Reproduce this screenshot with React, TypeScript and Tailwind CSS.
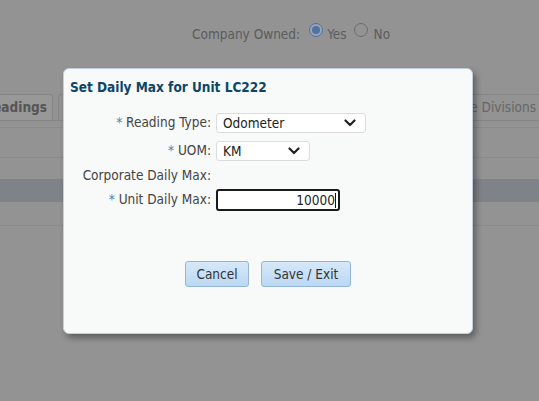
import React from 'react';

const font = { fontFamily: '"DejaVu Sans Condensed", Tahoma, "Noto Sans", sans-serif' };

function Chevron() {
  return (
    <svg width="12" height="8" viewBox="0 0 12 8" className="shrink-0">
      <path d="M1.5 1.5 L6 6 L10.5 1.5" fill="none" stroke="#222" strokeWidth="2.2" strokeLinecap="round" strokeLinejoin="round" />
    </svg>
  );
}

function Select({ value, width }: { value: string; width: string }) {
  return (
    <div className={`${width} h-[20px] flex items-center justify-between pl-[6px] pr-[9px] bg-white border border-[#dcdcdc] rounded-[3px] text-[13.5px] text-[#222]`}>
      <span>{value}</span>
      <Chevron />
    </div>
  );
}

function Label({ text, req }: { text: string; req?: boolean }) {
  return (
    <div className="w-[152px] shrink-0 text-right pr-[5px] text-[13.5px] text-[#444] leading-none">
      {req && <span className="text-[#4b86b8]">* </span>}
      {text}
    </div>
  );
}

export default function App() {
  return (
    <div className="relative w-[539px] h-[401px] overflow-hidden bg-[#939393]" style={font}>
      {/* dimmed page behind the dialog */}
      <div className="flex flex-col">
        <div className="h-[95px] pl-[192px] pt-[24px] flex items-start text-[13.5px] text-[#5c5c5c]">
          <span>Company Owned:</span>
          <span className="ml-[9px] mt-[-1px] w-[14px] h-[14px] rounded-full border border-[#4f72a3] flex items-center justify-center bg-[#9aa5b3]">
            <span className="w-[8px] h-[8px] rounded-full bg-[#4f72a3]" />
          </span>
          <span className="ml-[4px]">Yes</span>
          <span className="ml-[7px] mt-[-1px] w-[14px] h-[14px] rounded-full border border-[#6c6c6c]" />
          <span className="ml-[6px]">No</span>
        </div>
        <div className="h-[26px] flex items-end border-b border-[#858585]">
          <div className="h-[26px] w-[54px] border border-b-0 border-[#858585] rounded-tr-[4px] flex items-center justify-end pr-[5px] text-[13.5px] font-bold text-[#555] bg-[#989898] -ml-[1px]">
            eadings
          </div>
          <div className="h-[26px] w-[10px] ml-[5px] border border-b-0 border-[#858585] rounded-tl-[4px]" />
          <div className="flex-1" />
          <div className="h-[26px] w-[90px] border border-b-0 border-r-0 border-[#858585] rounded-tl-[4px] flex items-center justify-end pr-[4px] text-[13.5px] text-[#666] -mr-[1px]">
            e Divisions
          </div>
        </div>
        <div className="h-[7px] border-b border-[#8a8a8a]" />
        <div className="h-[31px] border-b border-[#8a8a8a] mt-[-1px]" />
        <div className="h-[21px]" />
        <div className="h-[23px] bg-[#7f8287]" />
        <div className="h-[24px] border-b border-[#8c8c8c]" />
      </div>

      {/* dialog */}
      <div className="absolute left-[63px] top-[68px] w-[410px] h-[266px] bg-[#f8f9f9] border border-[#c3cfdc] rounded-[6px] shadow-[3px_4px_6px_rgba(0,0,0,0.35)]">
        <div className="pl-[6px] pt-[9px] text-[13.5px] font-bold text-[#0c4667] leading-[18px]">
          Set Daily Max for Unit LC222
        </div>
        <div className="flex flex-col mt-[17px]">
          <div className="flex items-center h-[20px]">
            <Label text="Reading Type:" req />
            <Select value="Odometer" width="w-[150px]" />
          </div>
          <div className="flex items-center h-[20px] mt-[8px]">
            <Label text="UOM:" req />
            <Select value="KM" width="w-[94px]" />
          </div>
          <div className="flex items-center h-[16px] mt-[7px]">
            <Label text="Corporate Daily Max:" />
          </div>
          <div className="flex items-center h-[22px] mt-[5px]">
            <Label text="Unit Daily Max:" req />
            <div className="w-[124px] h-[22px] bg-white border-2 border-[#1a1a1a] rounded-[3px] flex items-center justify-end pr-[2px] text-[13.5px] text-[#222]">
              <span>10000</span>
              <span className="w-px h-[15px] bg-[#111]" />
            </div>
          </div>
        </div>
        <div className="flex pl-[121px] mt-[50px] gap-[12px]">
          <button className="w-[64px] h-[26px] rounded-[3px] border border-[#93b5d8] bg-[linear-gradient(#d6e8f9,#bcd8f3)] text-[13.5px] text-[#333]">
            Cancel
          </button>
          <button className="w-[90px] h-[26px] rounded-[3px] border border-[#93b5d8] bg-[linear-gradient(#d6e8f9,#bcd8f3)] text-[13.5px] text-[#333]">
            Save / Exit
          </button>
        </div>
      </div>
    </div>
  );
}
